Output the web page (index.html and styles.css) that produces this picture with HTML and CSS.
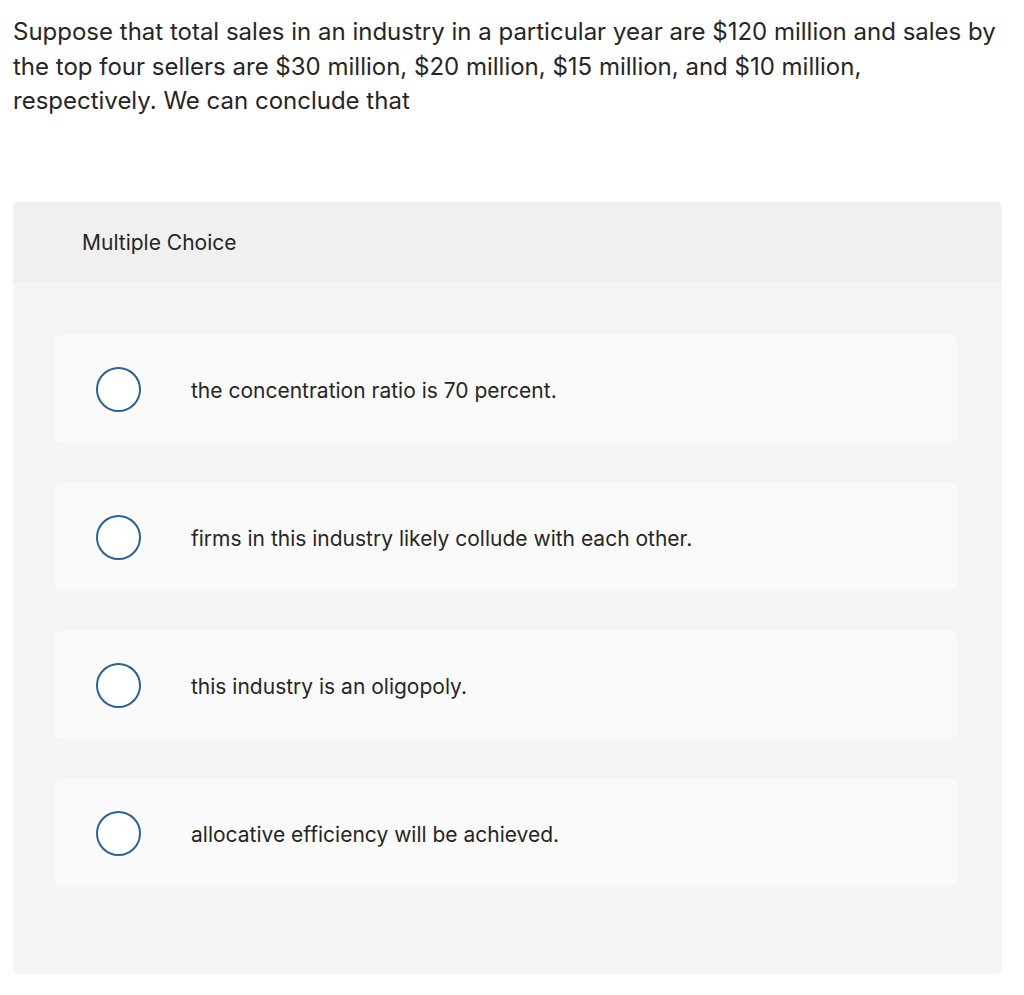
FILE: index.html
```html
<!DOCTYPE html>
<html lang="en">
<head>
<meta charset="utf-8">
<title>Multiple Choice</title>
<link rel="stylesheet" href="styles.css">
</head>
<body>
<main class="page">
  <p class="question">Suppose that total sales in an industry in a particular year are $120 million and sales by the top four sellers are $30 million, $20 million, $15 million, and $10 million, respectively. We can conclude that</p>
  <section class="panel">
    <header class="panel-head">Multiple Choice</header>
    <div class="options">
      <label class="option"><span class="radio"></span><span class="text">the concentration ratio is 70 percent.</span></label>
      <label class="option"><span class="radio"></span><span class="text">firms in this industry likely collude with each other.</span></label>
      <label class="option"><span class="radio"></span><span class="text">this industry is an oligopoly.</span></label>
      <label class="option"><span class="radio"></span><span class="text">allocative efficiency will be achieved.</span></label>
    </div>
  </section>
</main>
</body>
</html>
```

FILE: styles.css
```css
html, body {
  margin: 0;
  padding: 0;
  background: #ffffff;
}
body {
  font-family: "Inter", "Liberation Sans", sans-serif;
  color: #262626;
}
.page {
  padding: 15px 22px 22px 13px;
}
.question {
  margin: 0;
  font-size: 24px;
  line-height: 34.5px;
  width: 989px;
}
.panel {
  margin-top: 83px;
  background: #f5f5f5;
  border-radius: 5px;
  overflow: hidden;
  width: 989px;
}
.panel-head {
  background: #f0f0f0;
  height: 81px;
  display: flex;
  align-items: center;
  padding-left: 69px;
  font-size: 21px;
}
.options {
  display: flex;
  flex-direction: column;
  gap: 41px;
  padding: 52px 45px 88px 42px;
}
.option {
  background: #fafafa;
  border-radius: 5px;
  height: 107px;
  display: flex;
  align-items: center;
  padding-left: 41px;
}
.radio {
  width: 41px;
  height: 41px;
  margin-top: 2px;
  border: 2px solid #2b6196;
  border-radius: 50%;
  background: #ffffff;
  flex: none;
}
.text {
  margin-left: 50px;
  padding-top: 4px;
  font-size: 21px;
}
```
